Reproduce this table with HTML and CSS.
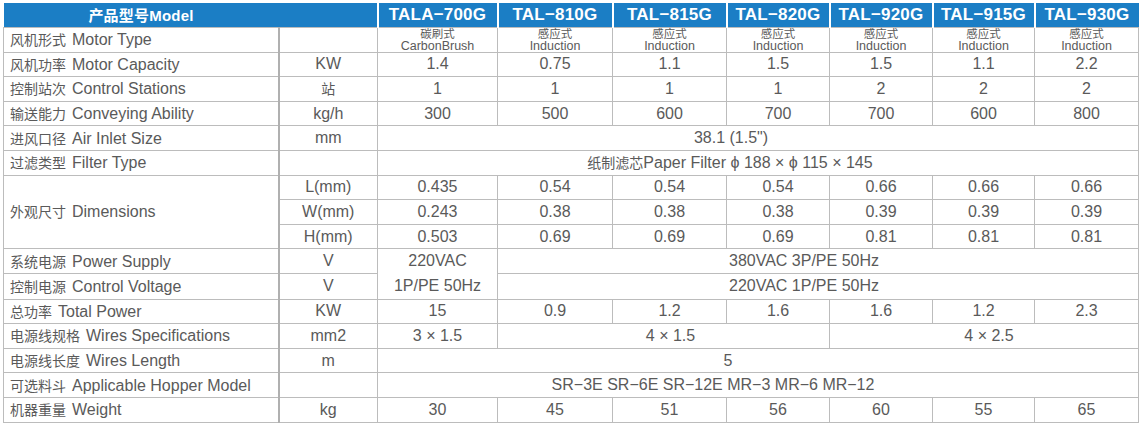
FILE: index.html
```html
<!DOCTYPE html>
<html lang="zh">
<head>
<meta charset="utf-8">
<title>Specifications</title>
<link rel="stylesheet" href="styles.css">
</head>
<body>
<table class="spec">
  <colgroup>
    <col class="c-label"><col class="c-unit">
    <col class="c1"><col class="c2"><col class="c3"><col class="c4"><col class="c5"><col class="c6"><col class="c7">
  </colgroup>
  <thead>
    <tr>
      <th colspan="2" class="h-model"><span class="h-zh">产品型号</span>Model</th>
      <th>TALA−700G</th>
      <th>TAL−810G</th>
      <th>TAL−815G</th>
      <th>TAL−820G</th>
      <th>TAL−920G</th>
      <th>TAL−915G</th>
      <th>TAL−930G</th>
    </tr>
  </thead>
  <tbody>
    <tr>
      <td class="label"><span class="zh">风机形式</span>Motor Type</td>
      <td class="unit"></td>
      <td class="two"><div class="zh-s">碳刷式</div><div class="en-s">CarbonBrush</div></td>
      <td class="two"><div class="zh-s">感应式</div><div class="en-s">Induction</div></td>
      <td class="two"><div class="zh-s">感应式</div><div class="en-s">Induction</div></td>
      <td class="two"><div class="zh-s">感应式</div><div class="en-s">Induction</div></td>
      <td class="two"><div class="zh-s">感应式</div><div class="en-s">Induction</div></td>
      <td class="two"><div class="zh-s">感应式</div><div class="en-s">Induction</div></td>
      <td class="two"><div class="zh-s">感应式</div><div class="en-s">Induction</div></td>
    </tr>
    <tr>
      <td class="label"><span class="zh">风机功率</span>Motor Capacity</td>
      <td class="unit">KW</td>
      <td>1.4</td><td>0.75</td><td>1.1</td><td>1.5</td><td>1.5</td><td>1.1</td><td>2.2</td>
    </tr>
    <tr>
      <td class="label"><span class="zh">控制站次</span>Control Stations</td>
      <td class="unit"><span class="zh-u">站</span></td>
      <td>1</td><td>1</td><td>1</td><td>1</td><td>2</td><td>2</td><td>2</td>
    </tr>
    <tr>
      <td class="label"><span class="zh">输送能力</span>Conveying Ability</td>
      <td class="unit">kg/h</td>
      <td>300</td><td>500</td><td>600</td><td>700</td><td>700</td><td>600</td><td>800</td>
    </tr>
    <tr>
      <td class="label"><span class="zh">进风口径</span>Air Inlet Size</td>
      <td class="unit">mm</td>
      <td colspan="7" class="off-54">38.1 (1.5")</td>
    </tr>
    <tr>
      <td class="label"><span class="zh">过滤类型</span>Filter Type</td>
      <td class="unit"></td>
      <td colspan="7" class="off-56"><span class="zh-v">纸制滤芯</span>Paper Filter ϕ 188 × ϕ 115 × 145</td>
    </tr>
    <tr>
      <td class="label" rowspan="3"><span class="zh">外观尺寸</span>Dimensions</td>
      <td class="unit">L(mm)</td>
      <td>0.435</td><td>0.54</td><td>0.54</td><td>0.54</td><td>0.66</td><td>0.66</td><td>0.66</td>
    </tr>
    <tr>
      <td class="unit">W(mm)</td>
      <td>0.243</td><td>0.38</td><td>0.38</td><td>0.38</td><td>0.39</td><td>0.39</td><td>0.39</td>
    </tr>
    <tr>
      <td class="unit">H(mm)</td>
      <td>0.503</td><td>0.69</td><td>0.69</td><td>0.69</td><td>0.81</td><td>0.81</td><td>0.81</td>
    </tr>
    <tr>
      <td class="label"><span class="zh">系统电源</span>Power Supply</td>
      <td class="unit">V</td>
      <td rowspan="2" class="dual"><div class="dual-line">220VAC</div><div class="dual-line">1P/PE 50Hz</div></td>
      <td colspan="6" class="off-28">380VAC 3P/PE 50Hz</td>
    </tr>
    <tr>
      <td class="label"><span class="zh">控制电源</span>Control Voltage</td>
      <td class="unit">V</td>
      <td colspan="6" class="off-28">220VAC 1P/PE 50Hz</td>
    </tr>
    <tr>
      <td class="label"><span class="zh">总功率</span>Total Power</td>
      <td class="unit">KW</td>
      <td>15</td><td>0.9</td><td>1.2</td><td>1.6</td><td>1.6</td><td>1.2</td><td>2.3</td>
    </tr>
    <tr>
      <td class="label"><span class="zh">电源线规格</span>Wires Specifications</td>
      <td class="unit">mm2</td>
      <td>3 × 1.5</td>
      <td colspan="3" class="on-14">4 × 1.5</td>
      <td colspan="3" class="on-10">4 × 2.5</td>
    </tr>
    <tr>
      <td class="label"><span class="zh">电源线长度</span>Wires Length</td>
      <td class="unit">m</td>
      <td colspan="7" class="off-60">5</td>
    </tr>
    <tr>
      <td class="label"><span class="zh">可选料斗</span>Applicable Hopper Model</td>
      <td class="unit"></td>
      <td colspan="7" class="off-90">SR−3E SR−6E SR−12E MR−3 MR−6 MR−12</td>
    </tr>
    <tr>
      <td class="label"><span class="zh">机器重量</span>Weight</td>
      <td class="unit">kg</td>
      <td>30</td><td>45</td><td>51</td><td>56</td><td>60</td><td>55</td><td>65</td>
    </tr>
  </tbody>
</table>
</body>
</html>
```

FILE: styles.css
```css
html, body {
  background: #ffffff;
}
body {
  margin: 3px 0 0 3px;
  font-family: "Liberation Sans", "Noto Sans CJK SC", sans-serif;
  color: #5a5a5a;
}
.spec {
  border-collapse: collapse;
  table-layout: fixed;
  width: 1135px;
  font-size: 16px;
}
.c-label { width: 275px; }
.c-unit { width: 99px; }
.c1 { width: 120px; }
.c2 { width: 115px; }
.c3 { width: 114px; }
.c4 { width: 103px; }
.c5 { width: 103px; }
.c6 { width: 102px; }
.c7 { width: 104px; }

.spec th {
  background: #1b7ec5;
  color: #ffffff;
  font-weight: bold;
  font-size: 17px;
  height: 24px;
  line-height: 20px;
  padding: 0;
  text-align: center;
  border-left: 2px solid #ffffff;
  border-right: 2px solid #ffffff;
  border-top: none;
  border-bottom: none;
  letter-spacing: 0.2px;
}
.spec th:first-child { border-left: none; }
.spec th:last-child { border-right: none; }
.spec th.h-model {
  font-size: 15px;
  padding-right: 98px;
}
.h-zh {
  font-family: "Noto Sans CJK SC", sans-serif;
  font-size: 15px;
}

.spec td {
  border: 1px solid #bcbcbc;
  padding: 0;
  height: 23.6px;
  text-align: center;
  vertical-align: middle;
  white-space: nowrap;
  line-height: 18px;
}
.spec td.label {
  text-align: left;
  padding-left: 6px;
  border-right: 2px solid #b0b0b0;
}
.zh {
  font-family: "Noto Sans CJK SC", sans-serif;
  font-size: 14px;
  margin-right: 6px;
}
.zh-u {
  font-family: "Noto Sans CJK SC", sans-serif;
  font-size: 14px;
}
.zh-v {
  font-family: "Noto Sans CJK SC", sans-serif;
  font-size: 14px;
}
.spec td.two {
  line-height: 11px;
  padding: 0;
}
.zh-s {
  font-family: "Noto Sans CJK SC", sans-serif;
  font-size: 11.5px;
  height: 11.5px;
  line-height: 11.5px;
}
.en-s {
  font-size: 12.5px;
  height: 12px;
  line-height: 12px;
}
.spec td.dual {
  padding: 0;
}
.dual-line {
  height: 24.6px;
  line-height: 24px;
}
.off-54 { padding-right: 54px !important; }
.off-56 { padding-right: 56px !important; }
.off-28 { padding-right: 28px !important; }
.off-60 { padding-right: 60px !important; }
.off-90 { padding-right: 90px !important; }
.on-14 { padding-left: 14px !important; }
.on-10 { padding-left: 10px !important; }
```
